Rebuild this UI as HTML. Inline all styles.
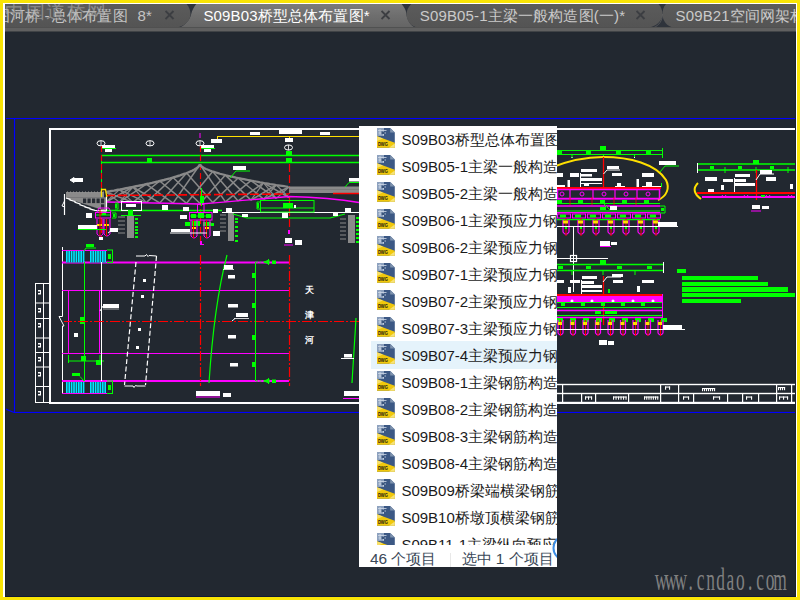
<!DOCTYPE html>
<html><head><meta charset="utf-8">
<style>
html,body{margin:0;padding:0;}
body{width:800px;height:600px;overflow:hidden;background:#f9e405;position:relative;font-family:"Liberation Sans",sans-serif;}
#wf{position:absolute;left:3px;top:3px;width:794px;height:594px;background:#ffffff;}
#cv{position:absolute;left:4px;top:4px;width:792px;height:593px;background:#222830;overflow:hidden;}
#clip{position:absolute;left:4px;top:4px;width:792px;height:593px;overflow:hidden;}
#tabs{position:absolute;left:4px;top:4px;width:792px;height:28px;overflow:hidden;}
.tt{position:absolute;top:2.8px;letter-spacing:0.15px;font-size:15px;line-height:18px;white-space:nowrap;}
#panel{position:absolute;left:359px;top:126px;width:198px;height:441px;background:#fff;overflow:hidden;}
.row{position:absolute;left:0;width:198px;height:27px;}
.row .ic{position:absolute;left:18px;top:1px;}
.row .tx{position:absolute;left:42.4px;top:2.7px;font-size:15px;line-height:20px;color:#1b1b1b;white-space:nowrap;}
.row .tx span{font-size:14.6px;}
#status{position:absolute;left:0;top:419px;width:198px;height:22px;font-size:15.4px;line-height:18px;color:#3a4858;}
#wm{position:absolute;left:655px;top:566px;font-family:"Liberation Serif",serif;font-size:22px;line-height:26px;color:#8d8d8d;}
</style></head>
<body>
<div id="wf"></div>
<div id="cv"></div>
<div id="clip"><svg width="800" height="600" viewBox="0 0 800 600" style="position:absolute;left:-4px;top:-4px">
<rect x="4" y="118" width="792" height="1.1" fill="#0000ff"/>
<rect x="13.9" y="118" width="1.2" height="295" fill="#0000ff"/>
<rect x="13.9" y="411.9" width="782" height="1.1" fill="#0000ff"/>
<line x1="4" y1="408.3" x2="14" y2="412.4" stroke="#0000ff" stroke-width="1.1"/>
<line x1="50" y1="129" x2="796" y2="129" stroke="#ffffff" stroke-width="2"/>
<line x1="50" y1="128" x2="50" y2="404" stroke="#ffffff" stroke-width="2"/>
<line x1="49" y1="403" x2="796" y2="403" stroke="#ffffff" stroke-width="2"/>
<rect x="35.5" y="283.5" width="14" height="119" fill="none" stroke="#ffffff" stroke-width="1"/>
<line x1="43.5" y1="283" x2="43.5" y2="403" stroke="#ffffff" stroke-width="1"/>
<line x1="35" y1="303" x2="50" y2="303" stroke="#ffffff" stroke-width="1"/>
<line x1="35" y1="318.5" x2="50" y2="318.5" stroke="#ffffff" stroke-width="1"/>
<line x1="35" y1="338" x2="50" y2="338" stroke="#ffffff" stroke-width="1"/>
<line x1="35" y1="352.5" x2="50" y2="352.5" stroke="#ffffff" stroke-width="1"/>
<line x1="35" y1="367" x2="50" y2="367" stroke="#ffffff" stroke-width="1"/>
<line x1="35" y1="386.5" x2="50" y2="386.5" stroke="#ffffff" stroke-width="1"/>
<rect x="38" y="290" width="3" height="1.5" fill="#ffffff"/>
<rect x="38" y="293" width="3" height="1.5" fill="#ffffff"/>
<rect x="40" y="291" width="1" height="3" fill="#ffffff"/>
<rect x="38" y="308" width="3" height="1.5" fill="#ffffff"/>
<rect x="38" y="311" width="3" height="1.5" fill="#ffffff"/>
<rect x="40" y="309" width="1" height="3" fill="#ffffff"/>
<rect x="38" y="323" width="3" height="1.5" fill="#ffffff"/>
<rect x="38" y="326" width="3" height="1.5" fill="#ffffff"/>
<rect x="40" y="324" width="1" height="3" fill="#ffffff"/>
<rect x="38" y="343" width="3" height="1.5" fill="#ffffff"/>
<rect x="38" y="346" width="3" height="1.5" fill="#ffffff"/>
<rect x="40" y="344" width="1" height="3" fill="#ffffff"/>
<rect x="38" y="357" width="3" height="1.5" fill="#ffffff"/>
<rect x="38" y="360" width="3" height="1.5" fill="#ffffff"/>
<rect x="40" y="358" width="1" height="3" fill="#ffffff"/>
<rect x="38" y="372" width="3" height="1.5" fill="#ffffff"/>
<rect x="38" y="375" width="3" height="1.5" fill="#ffffff"/>
<rect x="40" y="373" width="1" height="3" fill="#ffffff"/>
<rect x="38" y="391" width="3" height="1.5" fill="#ffffff"/>
<rect x="38" y="394" width="3" height="1.5" fill="#ffffff"/>
<rect x="40" y="392" width="1" height="3" fill="#ffffff"/>
<rect x="555" y="383.8" width="241" height="1.4" fill="#ffffff"/>
<rect x="555" y="392.8" width="241" height="1.4" fill="#ffffff"/>
<rect x="555" y="401.8" width="241" height="1.4" fill="#ffffff"/>
<rect x="562" y="384" width="1.2" height="19" fill="#ffffff"/>
<rect x="660" y="384" width="1.2" height="19" fill="#ffffff"/>
<rect x="678" y="384" width="1.2" height="19" fill="#ffffff"/>
<rect x="776" y="384" width="1.2" height="19" fill="#ffffff"/>
<rect x="791" y="384" width="1.2" height="19" fill="#ffffff"/>
<rect x="581" y="393" width="1.2" height="10" fill="#ffffff"/>
<rect x="595" y="393" width="1.2" height="10" fill="#ffffff"/>
<rect x="628" y="393" width="1.2" height="10" fill="#ffffff"/>
<rect x="693" y="393" width="1.2" height="10" fill="#ffffff"/>
<rect x="727" y="393" width="1.2" height="10" fill="#ffffff"/>
<rect x="742" y="393" width="1.2" height="10" fill="#ffffff"/>
<rect x="758" y="393" width="1.2" height="10" fill="#ffffff"/>
<rect x="665" y="386.5" width="1.1" height="3.2" fill="#ffffff"/>
<rect x="669" y="386.5" width="1.1" height="3.2" fill="#ffffff"/>
<rect x="665" y="386.5" width="5.1" height="1.1" fill="#ffffff"/>
<rect x="702" y="388" width="1.1" height="3.2" fill="#ffffff"/>
<rect x="704" y="388" width="1.1" height="3.2" fill="#ffffff"/>
<rect x="706" y="388" width="1.1" height="3.2" fill="#ffffff"/>
<rect x="708" y="388" width="1.1" height="3.2" fill="#ffffff"/>
<rect x="710" y="388" width="1.1" height="3.2" fill="#ffffff"/>
<rect x="712" y="388" width="1.1" height="3.2" fill="#ffffff"/>
<rect x="714" y="388" width="1.1" height="3.2" fill="#ffffff"/>
<rect x="702" y="388" width="13.1" height="1.1" fill="#ffffff"/>
<rect x="778" y="387" width="1.1" height="3.2" fill="#ffffff"/>
<rect x="780" y="387" width="1.1" height="3.2" fill="#ffffff"/>
<rect x="782" y="387" width="1.1" height="3.2" fill="#ffffff"/>
<rect x="784" y="387" width="1.1" height="3.2" fill="#ffffff"/>
<rect x="778" y="387" width="7.1" height="1.1" fill="#ffffff"/>
<rect x="585" y="396.5" width="1.1" height="3.2" fill="#ffffff"/>
<rect x="588" y="396.5" width="1.1" height="3.2" fill="#ffffff"/>
<rect x="591" y="396.5" width="1.1" height="3.2" fill="#ffffff"/>
<rect x="585" y="396.5" width="7.1" height="1.1" fill="#ffffff"/>
<rect x="613.0" y="396.5" width="1.1" height="3.2" fill="#ffffff"/>
<rect x="615.5" y="396.5" width="1.1" height="3.2" fill="#ffffff"/>
<rect x="618.0" y="396.5" width="1.1" height="3.2" fill="#ffffff"/>
<rect x="620.5" y="396.5" width="1.1" height="3.2" fill="#ffffff"/>
<rect x="623.0" y="396.5" width="1.1" height="3.2" fill="#ffffff"/>
<rect x="625.5" y="396.5" width="1.1" height="3.2" fill="#ffffff"/>
<rect x="613" y="396.5" width="13.6" height="1.1" fill="#ffffff"/>
<rect x="644.0" y="396.5" width="1.1" height="3.2" fill="#ffffff"/>
<rect x="646.2" y="396.5" width="1.1" height="3.2" fill="#ffffff"/>
<rect x="648.4" y="396.5" width="1.1" height="3.2" fill="#ffffff"/>
<rect x="650.6" y="396.5" width="1.1" height="3.2" fill="#ffffff"/>
<rect x="652.8" y="396.5" width="1.1" height="3.2" fill="#ffffff"/>
<rect x="655.0" y="396.5" width="1.1" height="3.2" fill="#ffffff"/>
<rect x="657.2" y="396.5" width="1.1" height="3.2" fill="#ffffff"/>
<rect x="644" y="396.5" width="14.3" height="1.1" fill="#ffffff"/>
<rect x="683" y="396.5" width="1.1" height="3.2" fill="#ffffff"/>
<rect x="688" y="396.5" width="1.1" height="3.2" fill="#ffffff"/>
<rect x="683" y="396.5" width="6.1" height="1.1" fill="#ffffff"/>
<rect x="713" y="396.5" width="1.1" height="3.2" fill="#ffffff"/>
<rect x="719" y="396.5" width="1.1" height="3.2" fill="#ffffff"/>
<rect x="713" y="396.5" width="7.1" height="1.1" fill="#ffffff"/>
<rect x="746" y="396.5" width="1.1" height="3.2" fill="#ffffff"/>
<rect x="751" y="396.5" width="1.1" height="3.2" fill="#ffffff"/>
<rect x="746" y="396.5" width="6.1" height="1.1" fill="#ffffff"/>
<rect x="779" y="396.5" width="1.1" height="3.2" fill="#ffffff"/>
<rect x="783" y="396.5" width="1.1" height="3.2" fill="#ffffff"/>
<rect x="787" y="396.5" width="1.1" height="3.2" fill="#ffffff"/>
<rect x="779" y="396.5" width="9.1" height="1.1" fill="#ffffff"/>
<ellipse cx="101" cy="143.3" rx="4" ry="2.6" fill="none" stroke="#ffffff" stroke-width="1"/>
<line x1="101" y1="140.8" x2="101" y2="145.8" stroke="#ffffff" stroke-width="0.8"/>
<ellipse cx="150" cy="143.3" rx="4" ry="2.6" fill="none" stroke="#ffffff" stroke-width="1"/>
<line x1="150" y1="140.8" x2="150" y2="145.8" stroke="#ffffff" stroke-width="0.8"/>
<ellipse cx="200" cy="143.3" rx="4" ry="2.6" fill="none" stroke="#ffffff" stroke-width="1"/>
<line x1="200" y1="140.8" x2="200" y2="145.8" stroke="#ffffff" stroke-width="0.8"/>
<ellipse cx="288.5" cy="147.5" rx="4" ry="2.6" fill="none" stroke="#ffffff" stroke-width="1"/>
<line x1="288.5" y1="145.0" x2="288.5" y2="150.0" stroke="#ffffff" stroke-width="0.8"/>
<rect x="102" y="145" width="13" height="3" fill="#ffffff"/>
<rect x="105" y="148" width="7" height="4" fill="#ffffff"/>
<line x1="101" y1="148.5" x2="116" y2="148.5" stroke="#00ff00" stroke-width="1"/>
<rect x="201" y="145" width="13" height="3" fill="#ffffff"/>
<rect x="204" y="148" width="7" height="4" fill="#ffffff"/>
<line x1="200" y1="148.5" x2="215" y2="148.5" stroke="#00ff00" stroke-width="1"/>
<line x1="217" y1="136.5" x2="360" y2="136.5" stroke="#ffe000" stroke-width="1"/>
<line x1="217.5" y1="136" x2="217.5" y2="141" stroke="#ffe000" stroke-width="1"/>
<line x1="289.5" y1="136" x2="289.5" y2="141" stroke="#ffe000" stroke-width="1"/>
<rect x="211" y="139" width="11" height="4" fill="#ffffff"/>
<rect x="285" y="138" width="8" height="4" fill="#ffffff"/>
<rect x="250" y="132" width="10" height="3" fill="#ffffff"/>
<rect x="279" y="130" width="23" height="4" fill="#ffffff"/>
<rect x="320" y="132" width="10" height="3" fill="#ffffff"/>
<rect x="199.5" y="133" width="1" height="5" fill="#ff00ff"/>
<line x1="101" y1="155.5" x2="360" y2="155.5" stroke="#00ff00" stroke-width="1.3"/>
<line x1="101" y1="162.5" x2="360" y2="162.5" stroke="#00ff00" stroke-width="1.3"/>
<line x1="101.5" y1="155" x2="101.5" y2="212" stroke="#00ff00" stroke-width="1"/>
<rect x="147" y="158" width="5" height="4" fill="#00ff00"/>
<rect x="286" y="151" width="6" height="4" fill="#00ff00"/>
<rect x="286" y="158" width="6" height="4" fill="#00ff00"/>
<line x1="101.5" y1="146" x2="101.5" y2="240" stroke="#ff0000" stroke-width="1.2" stroke-dasharray="6,3"/>
<line x1="200.5" y1="146" x2="200.5" y2="242" stroke="#ff0000" stroke-width="1.2" stroke-dasharray="6,3"/>
<line x1="289.5" y1="164" x2="289.5" y2="232" stroke="#ff0000" stroke-width="1.2" stroke-dasharray="8,3"/>
<g stroke="#8a8a8a" fill="none" stroke-width="1.2">
<polyline points="106.0,192.0 108.0,191.6 110.0,191.3 112.0,190.9 114.0,190.6 116.0,190.2 118.0,189.8 120.0,189.5 122.0,189.1 124.0,188.7 126.0,188.3 128.0,187.9 130.0,187.5 132.0,187.1 134.0,186.7 136.0,186.3 138.0,185.9 140.0,185.5 142.0,185.1 144.0,184.7 146.0,184.2 148.0,183.8 150.0,183.3 152.0,182.9 154.0,182.4 156.0,181.9 158.0,181.5 160.0,181.0 162.0,180.5 164.0,180.0 166.0,179.4 168.0,178.9 170.0,178.4 172.0,177.8 174.0,177.2 176.0,176.6 178.0,176.0 180.0,175.4 182.0,174.7 184.0,174.0 186.0,173.3 188.0,172.5 190.0,171.7 192.0,170.8 194.0,169.8 196.0,168.6 198.0,167.2 200.0,164.5" stroke-width="2.4"/>
<polyline points="200.0,164.5 202.0,166.8 204.0,168.0 206.0,169.0 208.0,169.8 210.0,170.6 212.0,171.3 214.0,171.9 216.0,172.5 218.0,173.1 220.0,173.7 222.0,174.2 224.0,174.7 226.0,175.3 228.0,175.7 230.0,176.2 232.0,176.7 234.0,177.1 236.0,177.6 238.0,178.0 240.0,178.4 242.0,178.8 244.0,179.2 246.0,179.6 248.0,180.0 250.0,180.4 252.0,180.8 254.0,181.2 256.0,181.5 258.0,181.9 260.0,182.3 262.0,182.6 264.0,183.0 266.0,183.3 268.0,183.6 270.0,184.0 272.0,184.3 274.0,184.6 276.0,185.0 278.0,185.3 280.0,185.6 282.0,185.9 284.0,186.2 286.0,186.5 288.0,186.8" stroke-width="2.2"/>
<line x1="106.0" y1="192.0" x2="132.9" y2="202.4" stroke-width="1.5"/>
<line x1="106.0" y1="192.0" x2="119.4" y2="202.2" stroke-width="1.2"/>
<line x1="119.4" y1="189.6" x2="146.3" y2="202.6" stroke-width="1.5"/>
<line x1="119.4" y1="189.6" x2="106.0" y2="202.0" stroke-width="1.2"/>
<line x1="119.4" y1="189.6" x2="132.9" y2="202.4" stroke-width="1.2"/>
<line x1="132.9" y1="187.0" x2="106.0" y2="202.0" stroke-width="1.5"/>
<line x1="132.9" y1="187.0" x2="159.7" y2="202.9" stroke-width="1.5"/>
<line x1="132.9" y1="187.0" x2="119.4" y2="202.2" stroke-width="1.2"/>
<line x1="132.9" y1="187.0" x2="146.3" y2="202.6" stroke-width="1.2"/>
<line x1="146.3" y1="184.2" x2="119.4" y2="202.2" stroke-width="1.5"/>
<line x1="146.3" y1="184.2" x2="173.1" y2="203.1" stroke-width="1.5"/>
<line x1="159.7" y1="181.0" x2="132.9" y2="202.4" stroke-width="1.5"/>
<line x1="159.7" y1="181.0" x2="186.6" y2="203.3" stroke-width="1.5"/>
<line x1="173.1" y1="177.5" x2="146.3" y2="202.6" stroke-width="1.5"/>
<line x1="173.1" y1="177.5" x2="200.0" y2="203.5" stroke-width="1.5"/>
<line x1="186.6" y1="173.1" x2="159.7" y2="202.9" stroke-width="1.5"/>
<line x1="186.6" y1="173.1" x2="212.7" y2="202.6" stroke-width="1.5"/>
<line x1="200.0" y1="164.5" x2="173.1" y2="203.1" stroke-width="1.5"/>
<line x1="200.0" y1="164.5" x2="225.4" y2="201.8" stroke-width="1.5"/>
<line x1="212.7" y1="171.5" x2="186.6" y2="203.3" stroke-width="1.5"/>
<line x1="212.7" y1="171.5" x2="238.1" y2="200.9" stroke-width="1.5"/>
<line x1="225.4" y1="175.1" x2="200.0" y2="203.5" stroke-width="1.5"/>
<line x1="225.4" y1="175.1" x2="250.9" y2="200.1" stroke-width="1.5"/>
<line x1="238.1" y1="178.0" x2="212.7" y2="202.6" stroke-width="1.5"/>
<line x1="238.1" y1="178.0" x2="263.6" y2="199.2" stroke-width="1.5"/>
<line x1="250.9" y1="180.6" x2="225.4" y2="201.8" stroke-width="1.5"/>
<line x1="250.9" y1="180.6" x2="276.3" y2="198.4" stroke-width="1.5"/>
<line x1="263.6" y1="182.9" x2="238.1" y2="200.9" stroke-width="1.5"/>
<line x1="263.6" y1="182.9" x2="289.0" y2="197.5" stroke-width="1.5"/>
<line x1="263.6" y1="182.9" x2="250.9" y2="200.1" stroke-width="1.2"/>
<line x1="263.6" y1="182.9" x2="276.3" y2="198.4" stroke-width="1.2"/>
<line x1="276.3" y1="185.0" x2="250.9" y2="200.1" stroke-width="1.5"/>
<line x1="276.3" y1="185.0" x2="263.6" y2="199.2" stroke-width="1.2"/>
<line x1="276.3" y1="185.0" x2="289.0" y2="197.5" stroke-width="1.2"/>
<line x1="289.0" y1="187.0" x2="263.6" y2="199.2" stroke-width="1.5"/>
<line x1="289.0" y1="187.0" x2="276.3" y2="198.4" stroke-width="1.2"/>
</g>
<rect x="66" y="192" width="38" height="5.5" fill="#8a8a8a"/>
<rect x="67" y="191.5" width="1" height="1" fill="#9a9a9a"/>
<rect x="70" y="191.5" width="1" height="1" fill="#9a9a9a"/>
<rect x="73" y="191.5" width="1" height="1" fill="#9a9a9a"/>
<rect x="76" y="191.5" width="1" height="1" fill="#9a9a9a"/>
<rect x="79" y="191.5" width="1" height="1" fill="#9a9a9a"/>
<rect x="82" y="191.5" width="1" height="1" fill="#9a9a9a"/>
<rect x="85" y="191.5" width="1" height="1" fill="#9a9a9a"/>
<rect x="88" y="191.5" width="1" height="1" fill="#9a9a9a"/>
<rect x="91" y="191.5" width="1" height="1" fill="#9a9a9a"/>
<rect x="94" y="191.5" width="1" height="1" fill="#9a9a9a"/>
<rect x="97" y="191.5" width="1" height="1" fill="#9a9a9a"/>
<rect x="100" y="191.5" width="1" height="1" fill="#9a9a9a"/>
<rect x="103" y="191.5" width="1" height="1" fill="#9a9a9a"/>
<path d="M66 197.5 L106 197.5 L106 211 L66 198 Z" stroke="#8a8a8a" stroke-width="0.3" fill="#8a8a8a"/>
<rect x="83" y="198.5" width="3.2" height="4.6" fill="#272c34"/>
<rect x="87.5" y="198.5" width="3.2" height="4.6" fill="#272c34"/>
<rect x="92" y="198.5" width="3.2" height="4.6" fill="#272c34"/>
<rect x="96.5" y="198.5" width="3.2" height="4.6" fill="#272c34"/>
<rect x="101" y="198.5" width="3.2" height="4.6" fill="#272c34"/>
<rect x="101" y="204.3" width="3.2" height="4.6" fill="#272c34"/>
<path d="M66 198 L70 199.3 L70 200 L75 201.5 L75 202.3 L80 204 L80 204.8 L85 206.4 L85 207 L90 208.3 L90 209 L95 210.4 L106 211" stroke="#ffffff" stroke-width="1.3" fill="none"/>
<line x1="106.5" y1="196" x2="106.5" y2="211.5" stroke="#ffffff" stroke-width="1.2"/>
<line x1="64.5" y1="194" x2="64.5" y2="215" stroke="#ffffff" stroke-width="1.2"/>
<path d="M64.5 201 L62 206 L65 207" stroke="#ffffff" stroke-width="1" fill="none"/>
<rect x="289" y="186.5" width="71" height="6.5" fill="#8a8a8a"/>
<line x1="289" y1="189.5" x2="360" y2="189.5" stroke="#787878" stroke-width="0.8"/>
<line x1="106" y1="195.5" x2="289" y2="194" stroke="#ff0000" stroke-width="1.6" stroke-dasharray="9,3"/>
<line x1="333" y1="193.5" x2="360" y2="193.5" stroke="#ff0000" stroke-width="1.5"/>
<path d="M107 202 Q160 203 200 204 Q250 200 289 196.5 Q330 197.5 359 202.5" stroke="#ff00ff" stroke-width="1.4" fill="none"/>
<path d="M101.5 197 L101.5 189.5 L105.5 189.5 L106.8 197" stroke="#ffe000" stroke-width="1.3" fill="none"/>
<rect x="233" y="166" width="13" height="4" fill="#ffffff"/>
<line x1="236" y1="171" x2="250" y2="171" stroke="#00ff00" stroke-width="1"/>
<line x1="230" y1="178" x2="236" y2="171" stroke="#00ff00" stroke-width="1"/>
<rect x="349" y="178" width="12" height="3.5" fill="#ffffff"/>
<line x1="349" y1="182.5" x2="360" y2="182.5" stroke="#00ff00" stroke-width="1"/>
<line x1="345" y1="187" x2="349" y2="182.5" stroke="#00ff00" stroke-width="1"/>
<rect x="74" y="178" width="9" height="4" fill="#ffffff"/>
<path d="M70 180 L74 177.5 L74 182.5 Z" stroke="#ffffff" stroke-width="1" fill="#ffffff"/>
<line x1="107" y1="210.5" x2="222" y2="210.5" stroke="#00ff00" stroke-width="1.3"/>
<line x1="222" y1="212.5" x2="359" y2="212.5" stroke="#ffffff" stroke-width="1.2"/>
<rect x="121.5" y="201.5" width="20" height="9" fill="none" stroke="#ffffff" stroke-width="1"/>
<rect x="126" y="204" width="10" height="3" fill="#ffffff"/>
<path d="M115 203 L118 203 L118 209 L115 209" stroke="#00ff00" stroke-width="1" fill="none"/>
<rect x="115" y="204" width="2" height="4" fill="#00ff00"/>
<line x1="121" y1="215.5" x2="141" y2="215.5" stroke="#00ff00" stroke-width="1"/>
<rect x="128" y="210" width="5" height="5" fill="#00ff00"/>
<rect x="127" y="216" width="7" height="22" fill="#8a8a8a"/>
<rect x="135" y="218" width="3" height="2" fill="#00ff00"/>
<rect x="135" y="222" width="3" height="2" fill="#00ff00"/>
<rect x="135" y="226" width="3" height="2" fill="#00ff00"/>
<rect x="135" y="229" width="3" height="2" fill="#00ff00"/>
<rect x="135" y="232" width="3" height="2" fill="#00ff00"/>
<rect x="135" y="236" width="3" height="2" fill="#00ff00"/>
<line x1="118" y1="217" x2="125" y2="217" stroke="#8a8a8a" stroke-width="1"/>
<line x1="118" y1="221" x2="125" y2="221" stroke="#8a8a8a" stroke-width="1"/>
<line x1="118" y1="225" x2="125" y2="225" stroke="#8a8a8a" stroke-width="1"/>
<line x1="118" y1="229" x2="125" y2="229" stroke="#8a8a8a" stroke-width="1"/>
<line x1="118" y1="233" x2="125" y2="233" stroke="#8a8a8a" stroke-width="1"/>
<rect x="86" y="213" width="6" height="5" fill="#ffffff"/>
<path d="M97 212 L99 208 L109 208 L111 212" stroke="#ff00ff" stroke-width="1" fill="none"/>
<rect x="95.5" y="212.5" width="15" height="5.5" fill="none" stroke="#ff00ff" stroke-width="1"/>
<line x1="96" y1="215" x2="110" y2="215" stroke="#00ff00" stroke-width="1"/>
<rect x="102" y="213" width="4" height="2" fill="#00ff00"/>
<path d="M112 213 L116 213 L116 218 L112 218" stroke="#00ff00" stroke-width="1" fill="none"/>
<rect x="113" y="214" width="2" height="3" fill="#00ff00"/>
<path d="M97 219 L97 234 Q100 238 103 234 L103 219" stroke="#ff00ff" stroke-width="1" fill="none"/>
<path d="M104 219 L104 234 Q107 238 110 234 L110 219" stroke="#ff00ff" stroke-width="1" fill="none"/>
<rect x="97" y="224" width="5" height="2" fill="#ffe000"/>
<rect x="104" y="224" width="5" height="2" fill="#ffe000"/>
<line x1="100" y1="210" x2="100" y2="236" stroke="#ff0000" stroke-width="1"/>
<line x1="106.5" y1="219" x2="106.5" y2="236" stroke="#ff0000" stroke-width="1"/>
<rect x="78" y="225" width="19" height="4" fill="#ffffff"/>
<line x1="78" y1="229.5" x2="106" y2="229.5" stroke="#00ff00" stroke-width="1"/>
<rect x="110" y="228" width="8" height="4" fill="#ffffff"/>
<line x1="108" y1="233" x2="112" y2="230" stroke="#ffffff" stroke-width="1"/>
<rect x="99" y="237" width="4" height="3" fill="#ffffff"/>
<rect x="86" y="244" width="8" height="2" fill="#00ff00"/>
<rect x="197.5" y="204.5" width="6.5" height="8" fill="none" stroke="#ff00ff" stroke-width="1"/>
<rect x="189.5" y="212.5" width="22.5" height="7.5" fill="none" stroke="#ff00ff" stroke-width="1"/>
<rect x="191" y="214" width="5" height="4" fill="#00ff00"/>
<rect x="198" y="213" width="6" height="5" fill="#00ff00"/>
<rect x="206" y="214" width="5" height="4" fill="#00ff00"/>
<line x1="190" y1="216" x2="212" y2="216" stroke="#00ff00" stroke-width="0.8"/>
<rect x="185" y="222" width="5" height="4" fill="#00ff00"/>
<rect x="192" y="221" width="8" height="5" fill="#00ff00"/>
<rect x="203" y="222" width="8" height="4" fill="#00ff00"/>
<rect x="211" y="223" width="3" height="3" fill="#00ff00"/>
<path d="M191 220 L191 236 Q194 240 197 236 L197 220" stroke="#ff00ff" stroke-width="1" fill="none"/>
<path d="M204 220 L204 236 Q207 240 210 236 L210 220" stroke="#ff00ff" stroke-width="1" fill="none"/>
<rect x="192" y="227" width="4" height="2" fill="#ffe000"/>
<rect x="205" y="227" width="4" height="2" fill="#ffe000"/>
<line x1="193.5" y1="220" x2="193.5" y2="238" stroke="#ff0000" stroke-width="1"/>
<line x1="206.5" y1="220" x2="206.5" y2="238" stroke="#ff0000" stroke-width="1"/>
<rect x="171" y="229" width="19" height="3" fill="#ffffff"/>
<line x1="170" y1="233" x2="207" y2="233" stroke="#ffffff" stroke-width="1"/>
<rect x="162" y="205" width="6" height="5" fill="#ffffff"/>
<rect x="183" y="207" width="6" height="4" fill="#ffffff"/>
<rect x="180" y="215" width="7" height="4" fill="#ffffff"/>
<rect x="213" y="209" width="5" height="4" fill="#ffffff"/>
<rect x="226" y="208" width="6" height="5" fill="#ffffff"/>
<rect x="213" y="231" width="7" height="5" fill="#ffffff"/>
<rect x="200" y="241" width="2" height="4" fill="#ff00ff"/>
<line x1="200" y1="244.5" x2="204" y2="244.5" stroke="#ff00ff" stroke-width="1"/>
<rect x="228" y="213" width="6" height="28" fill="#8a8a8a"/>
<rect x="235" y="218" width="3" height="2" fill="#00ff00"/>
<rect x="235" y="221" width="3" height="2" fill="#00ff00"/>
<rect x="235" y="226" width="3" height="2" fill="#00ff00"/>
<rect x="235" y="230" width="3" height="2" fill="#00ff00"/>
<rect x="235" y="235" width="3" height="2" fill="#00ff00"/>
<rect x="235" y="240" width="3" height="2" fill="#00ff00"/>
<line x1="220" y1="215" x2="226" y2="215" stroke="#8a8a8a" stroke-width="1"/>
<line x1="220" y1="219" x2="226" y2="219" stroke="#8a8a8a" stroke-width="1"/>
<line x1="220" y1="223" x2="226" y2="223" stroke="#8a8a8a" stroke-width="1"/>
<line x1="220" y1="227" x2="226" y2="227" stroke="#8a8a8a" stroke-width="1"/>
<line x1="220" y1="231" x2="226" y2="231" stroke="#8a8a8a" stroke-width="1"/>
<rect x="348" y="215" width="7" height="28" fill="#8a8a8a"/>
<rect x="356" y="217" width="3" height="2" fill="#00ff00"/>
<rect x="356" y="221" width="3" height="2" fill="#00ff00"/>
<rect x="356" y="225" width="3" height="2" fill="#00ff00"/>
<rect x="356" y="229" width="3" height="2" fill="#00ff00"/>
<rect x="356" y="233" width="3" height="2" fill="#00ff00"/>
<rect x="356" y="237" width="3" height="2" fill="#00ff00"/>
<rect x="356" y="241" width="3" height="2" fill="#00ff00"/>
<line x1="340" y1="219" x2="346" y2="219" stroke="#8a8a8a" stroke-width="1"/>
<line x1="340" y1="223" x2="346" y2="223" stroke="#8a8a8a" stroke-width="1"/>
<line x1="340" y1="227" x2="346" y2="227" stroke="#8a8a8a" stroke-width="1"/>
<line x1="340" y1="231" x2="346" y2="231" stroke="#8a8a8a" stroke-width="1"/>
<line x1="340" y1="235" x2="346" y2="235" stroke="#8a8a8a" stroke-width="1"/>
<line x1="340" y1="239" x2="346" y2="239" stroke="#8a8a8a" stroke-width="1"/>
<path d="M233 214 L247 218 L330 218 L345 214" stroke="#00ff00" stroke-width="1.2" fill="none"/>
<rect x="260.5" y="200.5" width="53.5" height="11.5" fill="none" stroke="#00ff00" stroke-width="1"/>
<line x1="260" y1="208" x2="314" y2="208" stroke="#00ff00" stroke-width="1"/>
<rect x="283" y="203" width="10" height="5" fill="#00ff00"/>
<rect x="294" y="205" width="2" height="3" fill="#ffffff"/>
<path d="M260 202 L257 202 L257 209 L260 209" stroke="#00ff00" stroke-width="1" fill="none"/>
<rect x="257" y="203" width="2" height="5" fill="#00ff00"/>
<rect x="282" y="213" width="6" height="5" fill="#ffffff"/>
<rect x="242" y="214" width="6" height="3" fill="#ffffff"/>
<rect x="333" y="213" width="5" height="3" fill="#ffffff"/>
<rect x="345" y="208" width="6" height="4" fill="#ffffff"/>
<rect x="285" y="238" width="7" height="5" fill="#ffffff"/>
<rect x="295" y="240" width="7" height="5" fill="#ffffff"/>
<line x1="284" y1="245" x2="293" y2="245" stroke="#ff00ff" stroke-width="1"/>
<rect x="288" y="230" width="2" height="4" fill="#ff00ff"/>
<line x1="201.5" y1="188" x2="201.5" y2="206" stroke="#00ff00" stroke-width="1"/>
<rect x="200" y="196" width="4" height="7" fill="#00ff00"/>
<line x1="62.5" y1="247" x2="62.5" y2="394" stroke="#ffffff" stroke-width="1"/>
<line x1="62" y1="262.5" x2="289" y2="262.5" stroke="#ff00ff" stroke-width="2"/>
<line x1="62" y1="381" x2="289" y2="381" stroke="#ff00ff" stroke-width="2"/>
<line x1="62" y1="290.5" x2="289" y2="290.5" stroke="#ff00ff" stroke-width="1.2"/>
<line x1="62" y1="353.5" x2="289" y2="353.5" stroke="#ff00ff" stroke-width="1.2"/>
<rect x="68.5" y="290.5" width="31" height="63" fill="none" stroke="#ff00ff" stroke-width="1"/>
<rect x="66" y="250" width="17" height="12.5" fill="#1c3a44"/>
<rect x="66" y="250" width="1.6" height="12.5" fill="#00e5ff"/>
<rect x="68.4" y="250" width="1.6" height="12.5" fill="#00e5ff"/>
<rect x="70.80000000000001" y="250" width="1.6" height="12.5" fill="#00e5ff"/>
<rect x="73.20000000000002" y="250" width="1.6" height="12.5" fill="#00e5ff"/>
<rect x="75.60000000000002" y="250" width="1.6" height="12.5" fill="#00e5ff"/>
<rect x="78.00000000000003" y="250" width="1.6" height="12.5" fill="#00e5ff"/>
<rect x="80.40000000000003" y="250" width="1.6" height="12.5" fill="#00e5ff"/>
<rect x="82.80000000000004" y="250" width="1.6" height="12.5" fill="#00e5ff"/>
<rect x="90" y="250" width="16" height="12.5" fill="#1c3a44"/>
<rect x="90" y="250" width="1.6" height="12.5" fill="#00e5ff"/>
<rect x="92.4" y="250" width="1.6" height="12.5" fill="#00e5ff"/>
<rect x="94.80000000000001" y="250" width="1.6" height="12.5" fill="#00e5ff"/>
<rect x="97.20000000000002" y="250" width="1.6" height="12.5" fill="#00e5ff"/>
<rect x="99.60000000000002" y="250" width="1.6" height="12.5" fill="#00e5ff"/>
<rect x="102.00000000000003" y="250" width="1.6" height="12.5" fill="#00e5ff"/>
<rect x="104.40000000000003" y="250" width="1.6" height="12.5" fill="#00e5ff"/>
<line x1="62" y1="250.5" x2="107" y2="250.5" stroke="#ff00ff" stroke-width="1.2"/>
<path d="M107 250 L113 250 M107 262.5 L113 262.5 M112.5 250 L112.5 262.5" stroke="#00ff00" stroke-width="1" fill="none"/>
<rect x="108" y="254" width="3" height="5" fill="#00ff00"/>
<rect x="66" y="381" width="17" height="12.5" fill="#1c3a44"/>
<rect x="66" y="381" width="1.6" height="12.5" fill="#00e5ff"/>
<rect x="68.4" y="381" width="1.6" height="12.5" fill="#00e5ff"/>
<rect x="70.80000000000001" y="381" width="1.6" height="12.5" fill="#00e5ff"/>
<rect x="73.20000000000002" y="381" width="1.6" height="12.5" fill="#00e5ff"/>
<rect x="75.60000000000002" y="381" width="1.6" height="12.5" fill="#00e5ff"/>
<rect x="78.00000000000003" y="381" width="1.6" height="12.5" fill="#00e5ff"/>
<rect x="80.40000000000003" y="381" width="1.6" height="12.5" fill="#00e5ff"/>
<rect x="82.80000000000004" y="381" width="1.6" height="12.5" fill="#00e5ff"/>
<rect x="90" y="381" width="16" height="12.5" fill="#1c3a44"/>
<rect x="90" y="381" width="1.6" height="12.5" fill="#00e5ff"/>
<rect x="92.4" y="381" width="1.6" height="12.5" fill="#00e5ff"/>
<rect x="94.80000000000001" y="381" width="1.6" height="12.5" fill="#00e5ff"/>
<rect x="97.20000000000002" y="381" width="1.6" height="12.5" fill="#00e5ff"/>
<rect x="99.60000000000002" y="381" width="1.6" height="12.5" fill="#00e5ff"/>
<rect x="102.00000000000003" y="381" width="1.6" height="12.5" fill="#00e5ff"/>
<rect x="104.40000000000003" y="381" width="1.6" height="12.5" fill="#00e5ff"/>
<line x1="62" y1="381.5" x2="107" y2="381.5" stroke="#ff00ff" stroke-width="1.2"/>
<path d="M107 381 L113 381 M107 393.5 L113 393.5 M112.5 381 L112.5 393.5" stroke="#00ff00" stroke-width="1" fill="none"/>
<rect x="108" y="385" width="3" height="5" fill="#00ff00"/>
<line x1="62" y1="393.5" x2="107" y2="393.5" stroke="#ff00ff" stroke-width="1.2"/>
<rect x="86" y="244" width="8" height="3" fill="#00ff00"/>
<path d="M84 251 L86 248 L96 248" stroke="#00ff00" stroke-width="1" fill="none"/>
<rect x="72" y="373" width="8" height="3" fill="#00ff00"/>
<path d="M80 376.5 L84 381" stroke="#00ff00" stroke-width="1" fill="none"/>
<line x1="84.5" y1="262" x2="84.5" y2="381" stroke="#00ff00" stroke-width="1"/>
<rect x="80" y="317" width="4" height="7" fill="#00ff00"/>
<rect x="81" y="356" width="5" height="5" fill="#00ff00"/>
<rect x="96" y="360" width="5" height="5" fill="#00ff00"/>
<line x1="68" y1="361" x2="104" y2="361" stroke="#00ff00" stroke-width="1"/>
<line x1="68.5" y1="355" x2="68.5" y2="363" stroke="#00ff00" stroke-width="1"/>
<line x1="100" y1="355" x2="100" y2="363" stroke="#00ff00" stroke-width="1"/>
<line x1="101.5" y1="262" x2="101.5" y2="381" stroke="#ffffff" stroke-width="1"/>
<rect x="103" y="304" width="16" height="4" fill="#ffffff"/>
<line x1="100" y1="311" x2="103" y2="306" stroke="#ffffff" stroke-width="1"/>
<line x1="103" y1="309" x2="119" y2="309" stroke="#ffffff" stroke-width="0.6"/>
<rect x="74" y="333" width="4" height="4" fill="#ffffff"/>
<line x1="62" y1="321.5" x2="360" y2="321.5" stroke="#ff0000" stroke-width="1.2" stroke-dasharray="10,2,2,2"/>
<line x1="200.5" y1="255" x2="200.5" y2="386" stroke="#ff0000" stroke-width="1.2" stroke-dasharray="10,2,2,2"/>
<line x1="289.5" y1="255" x2="289.5" y2="386" stroke="#ff0000" stroke-width="1.2" stroke-dasharray="10,2,2,2"/>
<rect x="61" y="314" width="3" height="13" fill="#222830"/>
<path d="M62.5 314 L62.5 316.5 L59 316.5 L64 326 L62.5 326 L62.5 328" stroke="#ffffff" stroke-width="1" fill="none"/>
<path d="M136 256 L145 256 L146.5 254.5 L148 256.5 L149 255.5 L156.5 256" stroke="#ffffff" stroke-width="1" fill="none"/>
<path d="M124.5 386 L133 386 L134 387.5 L135.5 385.5 L137 386 L145.5 386" stroke="#ffffff" stroke-width="1" fill="none"/>
<line x1="136" y1="262" x2="124.5" y2="385" stroke="#ffffff" stroke-width="1.2" stroke-dasharray="5,2.5"/>
<line x1="156.5" y1="256" x2="145.5" y2="385" stroke="#ffffff" stroke-width="1.2" stroke-dasharray="5,2.5"/>
<rect x="143" y="279" width="3" height="3" fill="#ffffff"/>
<rect x="141" y="295" width="3" height="3" fill="#ffffff"/>
<rect x="138" y="328" width="3" height="3" fill="#ffffff"/>
<rect x="136" y="346" width="3" height="3" fill="#ffffff"/>
<path d="M227 255 Q214 305 209 383" stroke="#00ff00" stroke-width="1.2" fill="none"/>
<path d="M356 318 Q354 350 352 383" stroke="#00ff00" stroke-width="1.2" fill="none"/>
<line x1="255.5" y1="262" x2="255.5" y2="381" stroke="#00ff00" stroke-width="1"/>
<rect x="252" y="273" width="3.5" height="5" fill="#00ff00"/>
<rect x="252" y="303" width="3.5" height="5" fill="#00ff00"/>
<rect x="252" y="335" width="3.5" height="5" fill="#00ff00"/>
<rect x="252" y="362" width="3.5" height="5" fill="#00ff00"/>
<line x1="256" y1="262" x2="266" y2="262" stroke="#00ff00" stroke-width="0.8" stroke-dasharray="2,1.5"/>
<path d="M264 262 L269 260 L269 264 Z" stroke="#00ff00" stroke-width="1" fill="#00ff00"/>
<line x1="268.5" y1="259" x2="268.5" y2="265" stroke="#00ff00" stroke-width="1"/>
<rect x="272" y="260.5" width="4" height="3.5" fill="#00ff00"/>
<line x1="256" y1="381" x2="266" y2="381" stroke="#00ff00" stroke-width="0.8" stroke-dasharray="2,1.5"/>
<path d="M264 381 L269 379 L269 383 Z" stroke="#00ff00" stroke-width="1" fill="#00ff00"/>
<line x1="268.5" y1="378" x2="268.5" y2="384" stroke="#00ff00" stroke-width="1"/>
<rect x="272" y="379.5" width="4" height="3.5" fill="#00ff00"/>
<rect x="228" y="275" width="7" height="3.5" fill="#ffffff"/>
<rect x="228" y="304" width="10" height="3.5" fill="#ffffff"/>
<rect x="228" y="335" width="8" height="3.5" fill="#ffffff"/>
<rect x="230" y="363" width="8" height="3.5" fill="#ffffff"/>
<rect x="224" y="265" width="9" height="4" fill="#ffffff"/>
<line x1="223" y1="269.5" x2="234" y2="269.5" stroke="#ffffff" stroke-width="0.8"/>
<rect x="236" y="313" width="12" height="4" fill="#ffffff"/>
<line x1="234" y1="318.5" x2="249" y2="318.5" stroke="#ffffff" stroke-width="0.8"/>
<line x1="232" y1="321" x2="235" y2="318.5" stroke="#ffffff" stroke-width="1"/>
<text x="305" y="293" fill="#ffffff" font-size="9" font-weight="bold" font-family="Liberation Sans">天</text>
<text x="305" y="318" fill="#ffffff" font-size="9" font-weight="bold" font-family="Liberation Sans">津</text>
<text x="305" y="343" fill="#ffffff" font-size="9" font-weight="bold" font-family="Liberation Sans">河</text>
<rect x="196" y="391" width="24" height="5" fill="#ffffff"/>
<line x1="196" y1="397" x2="220" y2="397" stroke="#ff00ff" stroke-width="1"/>
<rect x="223" y="393" width="8" height="4" fill="#ffffff"/>
<rect x="344" y="354" width="8" height="3.5" fill="#ffffff"/>
<line x1="341" y1="358.5" x2="354" y2="358.5" stroke="#ffffff" stroke-width="1"/>
<rect x="344" y="391" width="15" height="5" fill="#ffffff"/>
<line x1="343" y1="398.5" x2="359" y2="398.5" stroke="#ff00ff" stroke-width="1"/>
<line x1="557" y1="150.5" x2="662.5" y2="150.5" stroke="#00ff00" stroke-width="1.2"/>
<line x1="557" y1="154.5" x2="662.5" y2="154.5" stroke="#00ff00" stroke-width="1.2"/>
<rect x="557" y="150.5" width="5" height="4" fill="#00ff00"/>
<rect x="586" y="150.5" width="5" height="4" fill="#00ff00"/>
<rect x="616" y="150.5" width="5" height="4" fill="#00ff00"/>
<rect x="646" y="150.5" width="5" height="4" fill="#00ff00"/>
<line x1="572" y1="154" x2="572" y2="158" stroke="#00ff00" stroke-width="1"/>
<rect x="571.5" y="157" width="1" height="1" fill="#ffffff"/>
<line x1="603.5" y1="154" x2="603.5" y2="158" stroke="#00ff00" stroke-width="1"/>
<rect x="603.0" y="157" width="1" height="1" fill="#ffffff"/>
<line x1="634.5" y1="154" x2="634.5" y2="158" stroke="#00ff00" stroke-width="1"/>
<rect x="634.0" y="157" width="1" height="1" fill="#ffffff"/>
<line x1="662.5" y1="154" x2="662.5" y2="158" stroke="#00ff00" stroke-width="1"/>
<rect x="662.0" y="157" width="1" height="1" fill="#ffffff"/>
<line x1="662.5" y1="148" x2="662.5" y2="158" stroke="#00ff00" stroke-width="1"/>
<rect x="600" y="146" width="6" height="4.5" fill="#00ff00"/>
<path d="M550 168 C570 160 588 157 603 157 C630 157 656 164 666 180 C670 188 667 196 658 200" fill="none" stroke="#ffe000" stroke-width="2"/>
<line x1="603.5" y1="157" x2="603.5" y2="188" stroke="#ff0000" stroke-width="1.3"/>
<rect x="659" y="161" width="17" height="4" fill="#ffffff"/>
<line x1="665" y1="166" x2="679" y2="166" stroke="#00ff00" stroke-width="1"/>
<line x1="660" y1="172" x2="665" y2="166" stroke="#00ff00" stroke-width="1"/>
<rect x="581" y="169" width="16" height="3" fill="#ffffff"/>
<rect x="557" y="173" width="6" height="4" fill="#ffffff"/>
<rect x="570" y="173" width="9" height="4" fill="#ffffff"/>
<rect x="581" y="174" width="11" height="2.5" fill="#ffffff"/>
<rect x="581" y="178" width="21" height="3" fill="#ffffff"/>
<rect x="581" y="183" width="21" height="1" fill="#ffffff"/>
<rect x="584" y="184" width="5" height="2" fill="#ffffff"/>
<rect x="607" y="166" width="12" height="3" fill="#ffffff"/>
<rect x="612" y="173" width="10" height="3" fill="#ffffff"/>
<rect x="642" y="173" width="12" height="4" fill="#ffffff"/>
<rect x="617" y="183" width="4" height="3" fill="#ffffff"/>
<rect x="615" y="186" width="10" height="1" fill="#ffffff"/>
<line x1="580.5" y1="173" x2="580.5" y2="187" stroke="#ffffff" stroke-width="1"/>
<path d="M603.5 174 L607 170 L620 170" stroke="#ffffff" stroke-width="1" fill="none"/>
<rect x="567.5" y="180" width="2.5" height="7" fill="#ffffff"/>
<rect x="636.5" y="179" width="2.5" height="8" fill="#ffffff"/>
<rect x="646" y="182" width="6" height="5" fill="#ffffff"/>
<rect x="557" y="185" width="8" height="2" fill="#ffffff"/>
<rect x="642" y="186" width="20" height="1" fill="#ffffff"/>
<rect x="661" y="183" width="1" height="4" fill="#00ff00"/>
<rect x="557" y="187" width="104" height="2" fill="#ff0000"/>
<rect x="557.5" y="189.5" width="102" height="9" fill="none" stroke="#ff00ff" stroke-width="1.5"/>
<line x1="570" y1="189" x2="570" y2="198" stroke="#ff00ff" stroke-width="1.2"/>
<line x1="593" y1="189" x2="593" y2="198" stroke="#ff00ff" stroke-width="1.2"/>
<line x1="615" y1="189" x2="615" y2="198" stroke="#ff00ff" stroke-width="1.2"/>
<line x1="637" y1="189" x2="637" y2="198" stroke="#ff00ff" stroke-width="1.2"/>
<circle cx="562" cy="194" r="2" fill="none" stroke="#ff00ff" stroke-width="1"/>
<circle cx="582" cy="194" r="2" fill="none" stroke="#ff00ff" stroke-width="1"/>
<circle cx="604" cy="194" r="2" fill="none" stroke="#ff00ff" stroke-width="1"/>
<circle cx="626" cy="194" r="2" fill="none" stroke="#ff00ff" stroke-width="1"/>
<circle cx="648" cy="194" r="2" fill="none" stroke="#ff00ff" stroke-width="1"/>
<line x1="557" y1="198.7" x2="660" y2="198.7" stroke="#ff00ff" stroke-width="1.5"/>
<rect x="557" y="200" width="5" height="3.5" fill="#00ff00"/>
<rect x="578" y="200" width="5" height="3.5" fill="#00ff00"/>
<rect x="600" y="200" width="5" height="3.5" fill="#00ff00"/>
<rect x="622" y="200" width="5" height="3.5" fill="#00ff00"/>
<rect x="644" y="200" width="5" height="3.5" fill="#00ff00"/>
<line x1="557" y1="203.5" x2="660" y2="203.5" stroke="#00ff00" stroke-width="1.2"/>
<line x1="557" y1="206" x2="660" y2="206" stroke="#ff00ff" stroke-width="1.3"/>
<line x1="570" y1="197" x2="570" y2="205" stroke="#ff0000" stroke-width="0.8"/>
<line x1="592" y1="197" x2="592" y2="205" stroke="#ff0000" stroke-width="0.8"/>
<line x1="614" y1="197" x2="614" y2="205" stroke="#ff0000" stroke-width="0.8"/>
<line x1="636" y1="197" x2="636" y2="205" stroke="#ff0000" stroke-width="0.8"/>
<rect x="600" y="207" width="6" height="3" fill="#00ff00"/>
<rect x="610" y="206" width="7" height="4" fill="#ffffff"/>
<line x1="604" y1="204" x2="610" y2="210" stroke="#00ff00" stroke-width="1"/>
<path d="M660 206 L665 206 L665 213 L660 213" stroke="#00ff00" stroke-width="1" fill="none"/>
<rect x="661" y="208" width="3" height="3" fill="#00ff00"/>
<line x1="557" y1="211" x2="660" y2="211" stroke="#00ff00" stroke-width="1.2"/>
<line x1="557" y1="212.7" x2="660" y2="212.7" stroke="#ff00ff" stroke-width="1.3"/>
<rect x="557.5" y="214" width="13" height="4" fill="none" stroke="#ff00ff" stroke-width="1"/>
<rect x="560" y="214.5" width="6" height="3" fill="#00ff00"/>
<rect x="572.5" y="214" width="13" height="4" fill="none" stroke="#ff00ff" stroke-width="1"/>
<rect x="575" y="214.5" width="6" height="3" fill="#00ff00"/>
<rect x="587.5" y="214" width="13" height="4" fill="none" stroke="#ff00ff" stroke-width="1"/>
<rect x="590" y="214.5" width="6" height="3" fill="#00ff00"/>
<rect x="602.5" y="214" width="13" height="4" fill="none" stroke="#ff00ff" stroke-width="1"/>
<rect x="605" y="214.5" width="6" height="3" fill="#00ff00"/>
<rect x="617.5" y="214" width="13" height="4" fill="none" stroke="#ff00ff" stroke-width="1"/>
<rect x="620" y="214.5" width="6" height="3" fill="#00ff00"/>
<rect x="632.5" y="214" width="13" height="4" fill="none" stroke="#ff00ff" stroke-width="1"/>
<rect x="635" y="214.5" width="6" height="3" fill="#00ff00"/>
<rect x="647.5" y="214" width="13" height="4" fill="none" stroke="#ff00ff" stroke-width="1"/>
<rect x="650" y="214.5" width="6" height="3" fill="#00ff00"/>
<line x1="557" y1="219.7" x2="660" y2="219.7" stroke="#00ff00" stroke-width="1.2"/>
<path d="M563 220 L563 232 Q566 236.5 569 232 L569 220" stroke="#ff00ff" stroke-width="1.2" fill="none"/>
<line x1="566" y1="218" x2="566" y2="236" stroke="#ff0000" stroke-width="1"/>
<rect x="563" y="220.5" width="5" height="3" fill="#ffe000"/>
<rect x="565" y="227" width="2" height="2" fill="#00ff00"/>
<path d="M578 220 L578 232 Q581 236.5 584 232 L584 220" stroke="#ff00ff" stroke-width="1.2" fill="none"/>
<line x1="581" y1="218" x2="581" y2="236" stroke="#ff0000" stroke-width="1"/>
<rect x="578" y="220.5" width="5" height="3" fill="#ffe000"/>
<rect x="580" y="227" width="2" height="2" fill="#00ff00"/>
<path d="M593 220 L593 232 Q596 236.5 599 232 L599 220" stroke="#ff00ff" stroke-width="1.2" fill="none"/>
<line x1="596" y1="218" x2="596" y2="236" stroke="#ff0000" stroke-width="1"/>
<rect x="593" y="220.5" width="5" height="3" fill="#ffe000"/>
<rect x="595" y="227" width="2" height="2" fill="#00ff00"/>
<path d="M608 220 L608 232 Q611 236.5 614 232 L614 220" stroke="#ff00ff" stroke-width="1.2" fill="none"/>
<line x1="611" y1="218" x2="611" y2="236" stroke="#ff0000" stroke-width="1"/>
<rect x="608" y="220.5" width="5" height="3" fill="#ffe000"/>
<rect x="610" y="227" width="2" height="2" fill="#00ff00"/>
<path d="M623 220 L623 232 Q626 236.5 629 232 L629 220" stroke="#ff00ff" stroke-width="1.2" fill="none"/>
<line x1="626" y1="218" x2="626" y2="236" stroke="#ff0000" stroke-width="1"/>
<rect x="623" y="220.5" width="5" height="3" fill="#ffe000"/>
<rect x="625" y="227" width="2" height="2" fill="#00ff00"/>
<path d="M638 220 L638 232 Q641 236.5 644 232 L644 220" stroke="#ff00ff" stroke-width="1.2" fill="none"/>
<line x1="641" y1="218" x2="641" y2="236" stroke="#ff0000" stroke-width="1"/>
<rect x="638" y="220.5" width="5" height="3" fill="#ffe000"/>
<rect x="640" y="227" width="2" height="2" fill="#00ff00"/>
<path d="M653 220 L653 232 Q656 236.5 659 232 L659 220" stroke="#ff00ff" stroke-width="1.2" fill="none"/>
<line x1="656" y1="218" x2="656" y2="236" stroke="#ff0000" stroke-width="1"/>
<rect x="653" y="220.5" width="5" height="3" fill="#ffe000"/>
<rect x="655" y="227" width="2" height="2" fill="#00ff00"/>
<line x1="557" y1="226.5" x2="678" y2="226.5" stroke="#ffffff" stroke-width="1.2"/>
<rect x="658" y="222" width="19" height="5" fill="#ffffff"/>
<rect x="600" y="241" width="10" height="5" fill="#ffffff"/>
<rect x="611" y="242" width="6" height="3" fill="#ffffff"/>
<line x1="600" y1="246.5" x2="611" y2="246.5" stroke="#ff00ff" stroke-width="1"/>
<line x1="697" y1="164" x2="796" y2="164" stroke="#00ff00" stroke-width="1.3"/>
<line x1="697" y1="170" x2="796" y2="170" stroke="#00ff00" stroke-width="1.3"/>
<line x1="697.5" y1="163" x2="697.5" y2="173" stroke="#ffffff" stroke-width="1"/>
<line x1="725" y1="167" x2="725" y2="173" stroke="#00ff00" stroke-width="1"/>
<line x1="756" y1="167" x2="756" y2="173" stroke="#00ff00" stroke-width="1"/>
<line x1="788" y1="167" x2="788" y2="173" stroke="#00ff00" stroke-width="1"/>
<rect x="753" y="160" width="6" height="4" fill="#00ff00"/>
<rect x="710" y="166" width="4" height="3" fill="#00ff00"/>
<rect x="738" y="166" width="4" height="3" fill="#00ff00"/>
<rect x="770" y="166" width="4" height="3" fill="#00ff00"/>
<path d="M698 183 Q690 191 701 199" stroke="#ffe000" stroke-width="2" fill="none"/>
<line x1="756.5" y1="170" x2="756.5" y2="200" stroke="#ff0000" stroke-width="1.3"/>
<rect x="705" y="177" width="12" height="4" fill="#ffffff"/>
<rect x="723" y="179" width="10" height="3" fill="#ffffff"/>
<rect x="735" y="174" width="15" height="3" fill="#ffffff"/>
<rect x="735" y="179" width="11" height="3" fill="#ffffff"/>
<rect x="735" y="183" width="20" height="3" fill="#ffffff"/>
<rect x="760" y="170" width="12" height="4" fill="#ffffff"/>
<rect x="766" y="177" width="10" height="4" fill="#ffffff"/>
<line x1="734.5" y1="178" x2="734.5" y2="194" stroke="#ffffff" stroke-width="1"/>
<path d="M756 180 L760 174 L774 174" stroke="#ffffff" stroke-width="1" fill="none"/>
<rect x="721" y="185" width="3" height="5" fill="#ffffff"/>
<rect x="790" y="184" width="3" height="5" fill="#ffffff"/>
<rect x="708" y="189" width="6" height="3" fill="#ffffff"/>
<rect x="697" y="192" width="99" height="2" fill="#ff0000"/>
<line x1="702" y1="197" x2="796" y2="197" stroke="#ff00ff" stroke-width="2"/>
<path d="M722 195 L724 198 L726 195" stroke="#ff00ff" stroke-width="1" fill="none"/>
<path d="M744 195 L746 198 L748 195" stroke="#ff00ff" stroke-width="1" fill="none"/>
<path d="M766 195 L768 198 L770 195" stroke="#ff00ff" stroke-width="1" fill="none"/>
<path d="M788 195 L790 198 L792 195" stroke="#ff00ff" stroke-width="1" fill="none"/>
<rect x="761" y="195" width="4" height="2" fill="#00ff00"/>
<rect x="752" y="205" width="8" height="4" fill="#ffffff"/>
<rect x="762" y="206" width="7" height="3" fill="#ffffff"/>
<line x1="751" y1="211" x2="761" y2="211" stroke="#ff00ff" stroke-width="1"/>
<line x1="557" y1="258.5" x2="608" y2="258.5" stroke="#ffffff" stroke-width="1"/>
<line x1="573.5" y1="226" x2="573.5" y2="292" stroke="#ffffff" stroke-width="1"/>
<rect x="570.5" y="255.5" width="6" height="6" fill="none" stroke="#ffffff" stroke-width="1.2"/>
<line x1="557" y1="264.5" x2="664" y2="264.5" stroke="#00ff00" stroke-width="1.3"/>
<line x1="557" y1="270.5" x2="664" y2="270.5" stroke="#00ff00" stroke-width="1.3"/>
<line x1="663.5" y1="262" x2="663.5" y2="273" stroke="#ffffff" stroke-width="1"/>
<rect x="600" y="260" width="6" height="5" fill="#00ff00"/>
<rect x="558" y="266" width="5" height="3" fill="#00ff00"/>
<rect x="586" y="266" width="5" height="3" fill="#00ff00"/>
<rect x="617" y="266" width="5" height="3" fill="#00ff00"/>
<rect x="647" y="266" width="5" height="3" fill="#00ff00"/>
<line x1="572" y1="270" x2="572" y2="275" stroke="#00ff00" stroke-width="1"/>
<line x1="603" y1="270" x2="603" y2="275" stroke="#00ff00" stroke-width="1"/>
<line x1="635" y1="270" x2="635" y2="275" stroke="#00ff00" stroke-width="1"/>
<line x1="603.5" y1="276" x2="603.5" y2="325" stroke="#ff0000" stroke-width="1.3"/>
<rect x="582" y="276" width="15" height="3" fill="#ffffff"/>
<rect x="557" y="280" width="7" height="3" fill="#ffffff"/>
<rect x="570" y="280" width="10" height="3" fill="#ffffff"/>
<rect x="582" y="281" width="12" height="3" fill="#ffffff"/>
<rect x="612" y="274" width="11" height="3" fill="#ffffff"/>
<rect x="613" y="280" width="10" height="3" fill="#ffffff"/>
<rect x="642" y="280" width="12" height="3" fill="#ffffff"/>
<rect x="582" y="285" width="20" height="3" fill="#ffffff"/>
<rect x="582" y="290" width="20" height="2" fill="#ffffff"/>
<line x1="581.5" y1="280" x2="581.5" y2="295" stroke="#ffffff" stroke-width="1"/>
<path d="M603 282 L607 277 L621 277" stroke="#ffffff" stroke-width="1" fill="none"/>
<rect x="568" y="287" width="3" height="6" fill="#ffffff"/>
<rect x="637" y="286" width="3" height="6" fill="#ffffff"/>
<rect x="608" y="289" width="2" height="4" fill="#00ff00"/>
<rect x="557" y="294" width="105" height="2" fill="#ff0000"/>
<rect x="557" y="296" width="105" height="6" fill="#ff00ff"/>
<circle cx="572" cy="301" r="1.5" fill="#ffffff"/>
<circle cx="592" cy="301" r="1.5" fill="#ffffff"/>
<circle cx="613" cy="301" r="1.5" fill="#ffffff"/>
<circle cx="633" cy="301" r="1.5" fill="#ffffff"/>
<circle cx="653" cy="301" r="1.5" fill="#ffffff"/>
<line x1="557" y1="302.5" x2="662" y2="302.5" stroke="#00ff00" stroke-width="1.2"/>
<rect x="561" y="302" width="4" height="4" fill="#00ff00"/>
<rect x="581" y="302" width="4" height="4" fill="#00ff00"/>
<rect x="601" y="302" width="4" height="4" fill="#00ff00"/>
<rect x="621" y="302" width="4" height="4" fill="#00ff00"/>
<rect x="641" y="302" width="4" height="4" fill="#00ff00"/>
<line x1="557" y1="307.5" x2="662" y2="307.5" stroke="#00ff00" stroke-width="1.2"/>
<line x1="557" y1="310.5" x2="662" y2="310.5" stroke="#ff00ff" stroke-width="1.5"/>
<rect x="595" y="311" width="6" height="3" fill="#00ff00"/>
<rect x="605" y="311" width="12" height="3" fill="#00ff00"/>
<line x1="557" y1="315.5" x2="662" y2="315.5" stroke="#00ff00" stroke-width="1.2"/>
<line x1="557" y1="317.5" x2="662" y2="317.5" stroke="#ff00ff" stroke-width="1.5"/>
<line x1="662.5" y1="294" x2="662.5" y2="318" stroke="#ff00ff" stroke-width="1"/>
<rect x="557" y="318" width="6" height="4" fill="#00ff00"/>
<rect x="570" y="318" width="6" height="4" fill="#00ff00"/>
<rect x="583" y="318" width="6" height="4" fill="#00ff00"/>
<rect x="596" y="318" width="6" height="4" fill="#00ff00"/>
<rect x="609" y="318" width="6" height="4" fill="#00ff00"/>
<rect x="622" y="318" width="6" height="4" fill="#00ff00"/>
<rect x="635" y="318" width="6" height="4" fill="#00ff00"/>
<rect x="648" y="318" width="6" height="4" fill="#00ff00"/>
<rect x="661" y="318" width="6" height="4" fill="#00ff00"/>
<path d="M558.0 320 L558.0 333 Q560.5 337 563.0 333 L563.0 320" stroke="#ff00ff" stroke-width="1.2" fill="none"/>
<line x1="560.5" y1="320" x2="560.5" y2="336" stroke="#ff0000" stroke-width="1"/>
<rect x="558.0" y="322" width="4" height="3" fill="#ffe000"/>
<path d="M570.5 320 L570.5 333 Q573.0 337 575.5 333 L575.5 320" stroke="#ff00ff" stroke-width="1.2" fill="none"/>
<line x1="573.0" y1="320" x2="573.0" y2="336" stroke="#ff0000" stroke-width="1"/>
<rect x="570.5" y="322" width="4" height="3" fill="#ffe000"/>
<path d="M583.0 320 L583.0 333 Q585.5 337 588.0 333 L588.0 320" stroke="#ff00ff" stroke-width="1.2" fill="none"/>
<line x1="585.5" y1="320" x2="585.5" y2="336" stroke="#ff0000" stroke-width="1"/>
<rect x="583.0" y="322" width="4" height="3" fill="#ffe000"/>
<path d="M595.5 320 L595.5 333 Q598.0 337 600.5 333 L600.5 320" stroke="#ff00ff" stroke-width="1.2" fill="none"/>
<line x1="598.0" y1="320" x2="598.0" y2="336" stroke="#ff0000" stroke-width="1"/>
<rect x="595.5" y="322" width="4" height="3" fill="#ffe000"/>
<path d="M608.0 320 L608.0 333 Q610.5 337 613.0 333 L613.0 320" stroke="#ff00ff" stroke-width="1.2" fill="none"/>
<line x1="610.5" y1="320" x2="610.5" y2="336" stroke="#ff0000" stroke-width="1"/>
<rect x="608.0" y="322" width="4" height="3" fill="#ffe000"/>
<path d="M620.5 320 L620.5 333 Q623.0 337 625.5 333 L625.5 320" stroke="#ff00ff" stroke-width="1.2" fill="none"/>
<line x1="623.0" y1="320" x2="623.0" y2="336" stroke="#ff0000" stroke-width="1"/>
<rect x="620.5" y="322" width="4" height="3" fill="#ffe000"/>
<path d="M633.0 320 L633.0 333 Q635.5 337 638.0 333 L638.0 320" stroke="#ff00ff" stroke-width="1.2" fill="none"/>
<line x1="635.5" y1="320" x2="635.5" y2="336" stroke="#ff0000" stroke-width="1"/>
<rect x="633.0" y="322" width="4" height="3" fill="#ffe000"/>
<path d="M645.5 320 L645.5 333 Q648.0 337 650.5 333 L650.5 320" stroke="#ff00ff" stroke-width="1.2" fill="none"/>
<line x1="648.0" y1="320" x2="648.0" y2="336" stroke="#ff0000" stroke-width="1"/>
<rect x="645.5" y="322" width="4" height="3" fill="#ffe000"/>
<path d="M658.0 320 L658.0 333 Q660.5 337 663.0 333 L663.0 320" stroke="#ff00ff" stroke-width="1.2" fill="none"/>
<line x1="660.5" y1="320" x2="660.5" y2="336" stroke="#ff0000" stroke-width="1"/>
<rect x="658.0" y="322" width="4" height="3" fill="#ffe000"/>
<line x1="557" y1="329.5" x2="685" y2="329.5" stroke="#ffffff" stroke-width="1.2"/>
<rect x="663" y="325" width="19" height="4" fill="#ffffff"/>
<rect x="599" y="340" width="8" height="5" fill="#ffffff"/>
<rect x="608" y="341" width="6" height="4" fill="#ffffff"/>
<rect x="677" y="269" width="9" height="4" fill="#00ff00"/>
<rect x="682" y="276" width="76" height="4" fill="#00ff00"/>
<rect x="682" y="282" width="86" height="4" fill="#00ff00"/>
<rect x="682" y="287" width="106" height="5" fill="#00ff00"/>
<rect x="682" y="293" width="114" height="4" fill="#00ff00"/>
<rect x="682" y="299" width="59" height="4" fill="#00ff00"/>
</svg></div>
<div id="tabs">
<svg width="792" height="28" viewBox="0 0 792 28" style="position:absolute;left:0;top:0">
<defs>
<linearGradient id="ga" x1="0" y1="0" x2="0" y2="1"><stop offset="0" stop-color="#7b7b7b"/><stop offset="0.5" stop-color="#6e6e6e"/><stop offset="1" stop-color="#646464"/></linearGradient>
<linearGradient id="gi" x1="0" y1="0" x2="0" y2="1"><stop offset="0" stop-color="#5b5b5b"/><stop offset="1" stop-color="#545454"/></linearGradient>
</defs>
<rect x="0" y="0" width="792" height="24" fill="#2e333b"/>
<path d="M192.25 0 L397.6 0 C400 3 402 6 402.25 9.25 C403 16 406 21 411 23.6 L176 23.6 C181 21 186 16 187.25 10 C188 6 190 3 192.25 0 Z" fill="url(#ga)"/>
<path d="M-10 0 L182.6 0 C185 3 186.5 6.5 186.5 10 C186.5 17 180 22.5 172 23.6 L-10 23.6 Z" fill="url(#gi)"/>
<path d="M407.25 0 L654.5 0 C657 3 658.5 6.5 658.5 10 C658.5 17 652 22.5 644 23.6 L414 23.6 C407 22.5 402.5 17 402.5 10 C402.5 6.5 404.5 3 407.25 0 Z" fill="url(#gi)"/>
<path d="M662 0 L800 0 L800 23.6 L670 23.6 C663 22.5 658.5 17 658.5 10 C658.5 6.5 659.5 3 662 0 Z" fill="url(#gi)"/>
<path d="M658.5 10 C658.5 17 655 21 650 23.6" stroke="#6a6a6a" stroke-width="0.6" fill="none"/>
<rect x="0" y="23.2" width="792" height="4.5" fill="#606060"/>
<line x1="0" y1="23.5" x2="792" y2="23.5" stroke="#4e4e4e" stroke-width="0.8"/>
<rect x="0" y="27.7" width="792" height="1" fill="#222830"/>
</svg><div class="tt" style="left:-9px;color:#c4c4c4">图河桥</div><div class="tt" style="left:40.5px;color:#c4c4c4">-</div><div class="tt" style="left:48px;color:#c4c4c4">总体布置图</div><div class="tt" style="left:133.5px;color:#c4c4c4">8*</div><svg width="12" height="12" style="position:absolute;left:161px;top:6px"><path d="M0.5 1 L8.5 9 M8.5 1 L0.5 9" stroke="#3c3e42" stroke-width="1.9"/></svg><div class="tt" style="left:199.4px;color:#ffffff">S09B03桥型总体布置图*</div><svg width="12" height="12" style="position:absolute;left:377px;top:6px"><path d="M0.5 1 L8.5 9 M8.5 1 L0.5 9" stroke="#3c3e42" stroke-width="1.9"/></svg><div class="tt" style="left:415.75px;color:#cacaca">S09B05-1主梁一般构造图(一)*</div><svg width="12" height="12" style="position:absolute;left:632px;top:6px"><path d="M0.5 1 L8.5 9 M8.5 1 L0.5 9" stroke="#3c3e42" stroke-width="1.9"/></svg><div class="tt" style="left:671.5px;color:#cacaca">S09B21空间网架材料</div><div style="position:absolute;left:1px;top:-4px;font-family:&quot;Liberation Serif&quot;,serif;font-size:19px;line-height:24px;color:rgba(175,175,175,0.6);letter-spacing:1.5px;white-space:nowrap">中国道桥网</div></div>
<div id="panel"><div style="position:absolute;left:0;top:0;width:198px;height:419px;overflow:hidden"><div class="row" style="top:1px"><svg class="ic" width="18" height="20" viewBox="0 0 18 20"><path d="M0 0 L13.2 0 L17.8 4.6 L17.8 19.8 L0 19.8 Z" fill="#3c5884"/><path d="M13.2 0 L17.8 4.6 L13.2 4.6 Z" fill="#7f93ae"/><rect x="0" y="0" width="7" height="8" fill="#8ea2bf"/><path d="M1 2.5 L9.5 2.5 M3 1 L3 7 M1.5 5 L9 5 M6.5 3 L6.5 7.5" stroke="#d0dae8" stroke-width="0.8" fill="none"/><rect x="4.5" y="3.5" width="3" height="2.5" fill="#3a557c"/><path d="M0 8.2 L17.8 14.7 L17.8 19.8 L0 19.8 Z" fill="#f1c80c"/><path d="M0 8.2 L6 10.4 L0 13 Z" fill="#f7de66"/><path d="M12 19.8 L17.8 15.5 L17.8 19.8 Z" fill="#f6e27a"/><text x="0.9" y="18.4" font-size="5" font-family="Liberation Sans" font-weight="bold" fill="#1a1a10" textLength="10" lengthAdjust="spacingAndGlyphs">DWG</text></svg><div class="tx">S09B03<span>桥型总体布置图</span></div></div><div class="row" style="top:28px"><svg class="ic" width="18" height="20" viewBox="0 0 18 20"><path d="M0 0 L13.2 0 L17.8 4.6 L17.8 19.8 L0 19.8 Z" fill="#3c5884"/><path d="M13.2 0 L17.8 4.6 L13.2 4.6 Z" fill="#7f93ae"/><rect x="0" y="0" width="7" height="8" fill="#8ea2bf"/><path d="M1 2.5 L9.5 2.5 M3 1 L3 7 M1.5 5 L9 5 M6.5 3 L6.5 7.5" stroke="#d0dae8" stroke-width="0.8" fill="none"/><rect x="4.5" y="3.5" width="3" height="2.5" fill="#3a557c"/><path d="M0 8.2 L17.8 14.7 L17.8 19.8 L0 19.8 Z" fill="#f1c80c"/><path d="M0 8.2 L6 10.4 L0 13 Z" fill="#f7de66"/><path d="M12 19.8 L17.8 15.5 L17.8 19.8 Z" fill="#f6e27a"/><text x="0.9" y="18.4" font-size="5" font-family="Liberation Sans" font-weight="bold" fill="#1a1a10" textLength="10" lengthAdjust="spacingAndGlyphs">DWG</text></svg><div class="tx">S09B05-1<span>主梁一般构造</span></div></div><div class="row" style="top:55px"><svg class="ic" width="18" height="20" viewBox="0 0 18 20"><path d="M0 0 L13.2 0 L17.8 4.6 L17.8 19.8 L0 19.8 Z" fill="#3c5884"/><path d="M13.2 0 L17.8 4.6 L13.2 4.6 Z" fill="#7f93ae"/><rect x="0" y="0" width="7" height="8" fill="#8ea2bf"/><path d="M1 2.5 L9.5 2.5 M3 1 L3 7 M1.5 5 L9 5 M6.5 3 L6.5 7.5" stroke="#d0dae8" stroke-width="0.8" fill="none"/><rect x="4.5" y="3.5" width="3" height="2.5" fill="#3a557c"/><path d="M0 8.2 L17.8 14.7 L17.8 19.8 L0 19.8 Z" fill="#f1c80c"/><path d="M0 8.2 L6 10.4 L0 13 Z" fill="#f7de66"/><path d="M12 19.8 L17.8 15.5 L17.8 19.8 Z" fill="#f6e27a"/><text x="0.9" y="18.4" font-size="5" font-family="Liberation Sans" font-weight="bold" fill="#1a1a10" textLength="10" lengthAdjust="spacingAndGlyphs">DWG</text></svg><div class="tx">S09B05-2<span>主梁一般构造</span></div></div><div class="row" style="top:82px"><svg class="ic" width="18" height="20" viewBox="0 0 18 20"><path d="M0 0 L13.2 0 L17.8 4.6 L17.8 19.8 L0 19.8 Z" fill="#3c5884"/><path d="M13.2 0 L17.8 4.6 L13.2 4.6 Z" fill="#7f93ae"/><rect x="0" y="0" width="7" height="8" fill="#8ea2bf"/><path d="M1 2.5 L9.5 2.5 M3 1 L3 7 M1.5 5 L9 5 M6.5 3 L6.5 7.5" stroke="#d0dae8" stroke-width="0.8" fill="none"/><rect x="4.5" y="3.5" width="3" height="2.5" fill="#3a557c"/><path d="M0 8.2 L17.8 14.7 L17.8 19.8 L0 19.8 Z" fill="#f1c80c"/><path d="M0 8.2 L6 10.4 L0 13 Z" fill="#f7de66"/><path d="M12 19.8 L17.8 15.5 L17.8 19.8 Z" fill="#f6e27a"/><text x="0.9" y="18.4" font-size="5" font-family="Liberation Sans" font-weight="bold" fill="#1a1a10" textLength="10" lengthAdjust="spacingAndGlyphs">DWG</text></svg><div class="tx">S09B06-1<span>主梁预应力钢</span></div></div><div class="row" style="top:109px"><svg class="ic" width="18" height="20" viewBox="0 0 18 20"><path d="M0 0 L13.2 0 L17.8 4.6 L17.8 19.8 L0 19.8 Z" fill="#3c5884"/><path d="M13.2 0 L17.8 4.6 L13.2 4.6 Z" fill="#7f93ae"/><rect x="0" y="0" width="7" height="8" fill="#8ea2bf"/><path d="M1 2.5 L9.5 2.5 M3 1 L3 7 M1.5 5 L9 5 M6.5 3 L6.5 7.5" stroke="#d0dae8" stroke-width="0.8" fill="none"/><rect x="4.5" y="3.5" width="3" height="2.5" fill="#3a557c"/><path d="M0 8.2 L17.8 14.7 L17.8 19.8 L0 19.8 Z" fill="#f1c80c"/><path d="M0 8.2 L6 10.4 L0 13 Z" fill="#f7de66"/><path d="M12 19.8 L17.8 15.5 L17.8 19.8 Z" fill="#f6e27a"/><text x="0.9" y="18.4" font-size="5" font-family="Liberation Sans" font-weight="bold" fill="#1a1a10" textLength="10" lengthAdjust="spacingAndGlyphs">DWG</text></svg><div class="tx">S09B06-2<span>主梁预应力钢</span></div></div><div class="row" style="top:136px"><svg class="ic" width="18" height="20" viewBox="0 0 18 20"><path d="M0 0 L13.2 0 L17.8 4.6 L17.8 19.8 L0 19.8 Z" fill="#3c5884"/><path d="M13.2 0 L17.8 4.6 L13.2 4.6 Z" fill="#7f93ae"/><rect x="0" y="0" width="7" height="8" fill="#8ea2bf"/><path d="M1 2.5 L9.5 2.5 M3 1 L3 7 M1.5 5 L9 5 M6.5 3 L6.5 7.5" stroke="#d0dae8" stroke-width="0.8" fill="none"/><rect x="4.5" y="3.5" width="3" height="2.5" fill="#3a557c"/><path d="M0 8.2 L17.8 14.7 L17.8 19.8 L0 19.8 Z" fill="#f1c80c"/><path d="M0 8.2 L6 10.4 L0 13 Z" fill="#f7de66"/><path d="M12 19.8 L17.8 15.5 L17.8 19.8 Z" fill="#f6e27a"/><text x="0.9" y="18.4" font-size="5" font-family="Liberation Sans" font-weight="bold" fill="#1a1a10" textLength="10" lengthAdjust="spacingAndGlyphs">DWG</text></svg><div class="tx">S09B07-1<span>主梁预应力钢</span></div></div><div class="row" style="top:163px"><svg class="ic" width="18" height="20" viewBox="0 0 18 20"><path d="M0 0 L13.2 0 L17.8 4.6 L17.8 19.8 L0 19.8 Z" fill="#3c5884"/><path d="M13.2 0 L17.8 4.6 L13.2 4.6 Z" fill="#7f93ae"/><rect x="0" y="0" width="7" height="8" fill="#8ea2bf"/><path d="M1 2.5 L9.5 2.5 M3 1 L3 7 M1.5 5 L9 5 M6.5 3 L6.5 7.5" stroke="#d0dae8" stroke-width="0.8" fill="none"/><rect x="4.5" y="3.5" width="3" height="2.5" fill="#3a557c"/><path d="M0 8.2 L17.8 14.7 L17.8 19.8 L0 19.8 Z" fill="#f1c80c"/><path d="M0 8.2 L6 10.4 L0 13 Z" fill="#f7de66"/><path d="M12 19.8 L17.8 15.5 L17.8 19.8 Z" fill="#f6e27a"/><text x="0.9" y="18.4" font-size="5" font-family="Liberation Sans" font-weight="bold" fill="#1a1a10" textLength="10" lengthAdjust="spacingAndGlyphs">DWG</text></svg><div class="tx">S09B07-2<span>主梁预应力钢</span></div></div><div class="row" style="top:190px"><svg class="ic" width="18" height="20" viewBox="0 0 18 20"><path d="M0 0 L13.2 0 L17.8 4.6 L17.8 19.8 L0 19.8 Z" fill="#3c5884"/><path d="M13.2 0 L17.8 4.6 L13.2 4.6 Z" fill="#7f93ae"/><rect x="0" y="0" width="7" height="8" fill="#8ea2bf"/><path d="M1 2.5 L9.5 2.5 M3 1 L3 7 M1.5 5 L9 5 M6.5 3 L6.5 7.5" stroke="#d0dae8" stroke-width="0.8" fill="none"/><rect x="4.5" y="3.5" width="3" height="2.5" fill="#3a557c"/><path d="M0 8.2 L17.8 14.7 L17.8 19.8 L0 19.8 Z" fill="#f1c80c"/><path d="M0 8.2 L6 10.4 L0 13 Z" fill="#f7de66"/><path d="M12 19.8 L17.8 15.5 L17.8 19.8 Z" fill="#f6e27a"/><text x="0.9" y="18.4" font-size="5" font-family="Liberation Sans" font-weight="bold" fill="#1a1a10" textLength="10" lengthAdjust="spacingAndGlyphs">DWG</text></svg><div class="tx">S09B07-3<span>主梁预应力钢</span></div></div><div class="row" style="top:217px"><div style="position:absolute;left:12.3px;top:-2.3px;width:190px;height:28.1px;background:#e5f3fb"></div><svg class="ic" width="18" height="20" viewBox="0 0 18 20"><path d="M0 0 L13.2 0 L17.8 4.6 L17.8 19.8 L0 19.8 Z" fill="#3c5884"/><path d="M13.2 0 L17.8 4.6 L13.2 4.6 Z" fill="#7f93ae"/><rect x="0" y="0" width="7" height="8" fill="#8ea2bf"/><path d="M1 2.5 L9.5 2.5 M3 1 L3 7 M1.5 5 L9 5 M6.5 3 L6.5 7.5" stroke="#d0dae8" stroke-width="0.8" fill="none"/><rect x="4.5" y="3.5" width="3" height="2.5" fill="#3a557c"/><path d="M0 8.2 L17.8 14.7 L17.8 19.8 L0 19.8 Z" fill="#f1c80c"/><path d="M0 8.2 L6 10.4 L0 13 Z" fill="#f7de66"/><path d="M12 19.8 L17.8 15.5 L17.8 19.8 Z" fill="#f6e27a"/><text x="0.9" y="18.4" font-size="5" font-family="Liberation Sans" font-weight="bold" fill="#1a1a10" textLength="10" lengthAdjust="spacingAndGlyphs">DWG</text></svg><div class="tx">S09B07-4<span>主梁预应力钢</span></div></div><div class="row" style="top:244px"><svg class="ic" width="18" height="20" viewBox="0 0 18 20"><path d="M0 0 L13.2 0 L17.8 4.6 L17.8 19.8 L0 19.8 Z" fill="#3c5884"/><path d="M13.2 0 L17.8 4.6 L13.2 4.6 Z" fill="#7f93ae"/><rect x="0" y="0" width="7" height="8" fill="#8ea2bf"/><path d="M1 2.5 L9.5 2.5 M3 1 L3 7 M1.5 5 L9 5 M6.5 3 L6.5 7.5" stroke="#d0dae8" stroke-width="0.8" fill="none"/><rect x="4.5" y="3.5" width="3" height="2.5" fill="#3a557c"/><path d="M0 8.2 L17.8 14.7 L17.8 19.8 L0 19.8 Z" fill="#f1c80c"/><path d="M0 8.2 L6 10.4 L0 13 Z" fill="#f7de66"/><path d="M12 19.8 L17.8 15.5 L17.8 19.8 Z" fill="#f6e27a"/><text x="0.9" y="18.4" font-size="5" font-family="Liberation Sans" font-weight="bold" fill="#1a1a10" textLength="10" lengthAdjust="spacingAndGlyphs">DWG</text></svg><div class="tx">S09B08-1<span>主梁钢筋构造</span></div></div><div class="row" style="top:271px"><svg class="ic" width="18" height="20" viewBox="0 0 18 20"><path d="M0 0 L13.2 0 L17.8 4.6 L17.8 19.8 L0 19.8 Z" fill="#3c5884"/><path d="M13.2 0 L17.8 4.6 L13.2 4.6 Z" fill="#7f93ae"/><rect x="0" y="0" width="7" height="8" fill="#8ea2bf"/><path d="M1 2.5 L9.5 2.5 M3 1 L3 7 M1.5 5 L9 5 M6.5 3 L6.5 7.5" stroke="#d0dae8" stroke-width="0.8" fill="none"/><rect x="4.5" y="3.5" width="3" height="2.5" fill="#3a557c"/><path d="M0 8.2 L17.8 14.7 L17.8 19.8 L0 19.8 Z" fill="#f1c80c"/><path d="M0 8.2 L6 10.4 L0 13 Z" fill="#f7de66"/><path d="M12 19.8 L17.8 15.5 L17.8 19.8 Z" fill="#f6e27a"/><text x="0.9" y="18.4" font-size="5" font-family="Liberation Sans" font-weight="bold" fill="#1a1a10" textLength="10" lengthAdjust="spacingAndGlyphs">DWG</text></svg><div class="tx">S09B08-2<span>主梁钢筋构造</span></div></div><div class="row" style="top:298px"><svg class="ic" width="18" height="20" viewBox="0 0 18 20"><path d="M0 0 L13.2 0 L17.8 4.6 L17.8 19.8 L0 19.8 Z" fill="#3c5884"/><path d="M13.2 0 L17.8 4.6 L13.2 4.6 Z" fill="#7f93ae"/><rect x="0" y="0" width="7" height="8" fill="#8ea2bf"/><path d="M1 2.5 L9.5 2.5 M3 1 L3 7 M1.5 5 L9 5 M6.5 3 L6.5 7.5" stroke="#d0dae8" stroke-width="0.8" fill="none"/><rect x="4.5" y="3.5" width="3" height="2.5" fill="#3a557c"/><path d="M0 8.2 L17.8 14.7 L17.8 19.8 L0 19.8 Z" fill="#f1c80c"/><path d="M0 8.2 L6 10.4 L0 13 Z" fill="#f7de66"/><path d="M12 19.8 L17.8 15.5 L17.8 19.8 Z" fill="#f6e27a"/><text x="0.9" y="18.4" font-size="5" font-family="Liberation Sans" font-weight="bold" fill="#1a1a10" textLength="10" lengthAdjust="spacingAndGlyphs">DWG</text></svg><div class="tx">S09B08-3<span>主梁钢筋构造</span></div></div><div class="row" style="top:325px"><svg class="ic" width="18" height="20" viewBox="0 0 18 20"><path d="M0 0 L13.2 0 L17.8 4.6 L17.8 19.8 L0 19.8 Z" fill="#3c5884"/><path d="M13.2 0 L17.8 4.6 L13.2 4.6 Z" fill="#7f93ae"/><rect x="0" y="0" width="7" height="8" fill="#8ea2bf"/><path d="M1 2.5 L9.5 2.5 M3 1 L3 7 M1.5 5 L9 5 M6.5 3 L6.5 7.5" stroke="#d0dae8" stroke-width="0.8" fill="none"/><rect x="4.5" y="3.5" width="3" height="2.5" fill="#3a557c"/><path d="M0 8.2 L17.8 14.7 L17.8 19.8 L0 19.8 Z" fill="#f1c80c"/><path d="M0 8.2 L6 10.4 L0 13 Z" fill="#f7de66"/><path d="M12 19.8 L17.8 15.5 L17.8 19.8 Z" fill="#f6e27a"/><text x="0.9" y="18.4" font-size="5" font-family="Liberation Sans" font-weight="bold" fill="#1a1a10" textLength="10" lengthAdjust="spacingAndGlyphs">DWG</text></svg><div class="tx">S09B08-4<span>主梁钢筋构造</span></div></div><div class="row" style="top:352px"><svg class="ic" width="18" height="20" viewBox="0 0 18 20"><path d="M0 0 L13.2 0 L17.8 4.6 L17.8 19.8 L0 19.8 Z" fill="#3c5884"/><path d="M13.2 0 L17.8 4.6 L13.2 4.6 Z" fill="#7f93ae"/><rect x="0" y="0" width="7" height="8" fill="#8ea2bf"/><path d="M1 2.5 L9.5 2.5 M3 1 L3 7 M1.5 5 L9 5 M6.5 3 L6.5 7.5" stroke="#d0dae8" stroke-width="0.8" fill="none"/><rect x="4.5" y="3.5" width="3" height="2.5" fill="#3a557c"/><path d="M0 8.2 L17.8 14.7 L17.8 19.8 L0 19.8 Z" fill="#f1c80c"/><path d="M0 8.2 L6 10.4 L0 13 Z" fill="#f7de66"/><path d="M12 19.8 L17.8 15.5 L17.8 19.8 Z" fill="#f6e27a"/><text x="0.9" y="18.4" font-size="5" font-family="Liberation Sans" font-weight="bold" fill="#1a1a10" textLength="10" lengthAdjust="spacingAndGlyphs">DWG</text></svg><div class="tx">S09B09<span>桥梁端横梁钢筋</span></div></div><div class="row" style="top:379px"><svg class="ic" width="18" height="20" viewBox="0 0 18 20"><path d="M0 0 L13.2 0 L17.8 4.6 L17.8 19.8 L0 19.8 Z" fill="#3c5884"/><path d="M13.2 0 L17.8 4.6 L13.2 4.6 Z" fill="#7f93ae"/><rect x="0" y="0" width="7" height="8" fill="#8ea2bf"/><path d="M1 2.5 L9.5 2.5 M3 1 L3 7 M1.5 5 L9 5 M6.5 3 L6.5 7.5" stroke="#d0dae8" stroke-width="0.8" fill="none"/><rect x="4.5" y="3.5" width="3" height="2.5" fill="#3a557c"/><path d="M0 8.2 L17.8 14.7 L17.8 19.8 L0 19.8 Z" fill="#f1c80c"/><path d="M0 8.2 L6 10.4 L0 13 Z" fill="#f7de66"/><path d="M12 19.8 L17.8 15.5 L17.8 19.8 Z" fill="#f6e27a"/><text x="0.9" y="18.4" font-size="5" font-family="Liberation Sans" font-weight="bold" fill="#1a1a10" textLength="10" lengthAdjust="spacingAndGlyphs">DWG</text></svg><div class="tx">S09B10<span>桥墩顶横梁钢筋</span></div></div><div class="row" style="top:406px"><svg class="ic" width="18" height="20" viewBox="0 0 18 20"><path d="M0 0 L13.2 0 L17.8 4.6 L17.8 19.8 L0 19.8 Z" fill="#3c5884"/><path d="M13.2 0 L17.8 4.6 L13.2 4.6 Z" fill="#7f93ae"/><rect x="0" y="0" width="7" height="8" fill="#8ea2bf"/><path d="M1 2.5 L9.5 2.5 M3 1 L3 7 M1.5 5 L9 5 M6.5 3 L6.5 7.5" stroke="#d0dae8" stroke-width="0.8" fill="none"/><rect x="4.5" y="3.5" width="3" height="2.5" fill="#3a557c"/><path d="M0 8.2 L17.8 14.7 L17.8 19.8 L0 19.8 Z" fill="#f1c80c"/><path d="M0 8.2 L6 10.4 L0 13 Z" fill="#f7de66"/><path d="M12 19.8 L17.8 15.5 L17.8 19.8 Z" fill="#f6e27a"/><text x="0.9" y="18.4" font-size="5" font-family="Liberation Sans" font-weight="bold" fill="#1a1a10" textLength="10" lengthAdjust="spacingAndGlyphs">DWG</text></svg><div class="tx">S09B11-1<span>主梁纵向预应</span></div></div></div><svg width="198" height="441" style="position:absolute;left:0;top:0"><circle cx="207" cy="422" r="12.5" fill="none" stroke="#3d8ee6" stroke-width="2"/></svg><div id="status"><span style="position:absolute;left:11px;top:4.5px;white-space:nowrap">46 个项目</span><span style="position:absolute;left:90.5px;top:8px;width:1px;height:14px;background:#e8e8e8"></span><span style="position:absolute;left:102.5px;top:4.5px;white-space:nowrap">选中 1 个项目</span></div></div>
<svg width="800" height="600" style="position:absolute;left:0;top:0"><g font-family="Liberation Serif" font-size="31" fill="#808080"><text x="660.96" y="589.6" transform="translate(660.96 0) scale(0.56 1) translate(-660.96 0)" text-anchor="middle">w</text><text x="670.88" y="589.6" transform="translate(670.88 0) scale(0.56 1) translate(-670.88 0)" text-anchor="middle">w</text><text x="680.80" y="589.6" transform="translate(680.80 0) scale(0.56 1) translate(-680.80 0)" text-anchor="middle">w</text><text x="690.72" y="589.6" transform="translate(690.72 0) scale(0.56 1) translate(-690.72 0)" text-anchor="middle">.</text><text x="700.64" y="589.6" transform="translate(700.64 0) scale(0.56 1) translate(-700.64 0)" text-anchor="middle">c</text><text x="710.56" y="589.6" transform="translate(710.56 0) scale(0.56 1) translate(-710.56 0)" text-anchor="middle">n</text><text x="720.48" y="589.6" transform="translate(720.48 0) scale(0.56 1) translate(-720.48 0)" text-anchor="middle">d</text><text x="730.40" y="589.6" transform="translate(730.40 0) scale(0.56 1) translate(-730.40 0)" text-anchor="middle">a</text><text x="740.32" y="589.6" transform="translate(740.32 0) scale(0.56 1) translate(-740.32 0)" text-anchor="middle">o</text><text x="750.24" y="589.6" transform="translate(750.24 0) scale(0.56 1) translate(-750.24 0)" text-anchor="middle">.</text><text x="760.16" y="589.6" transform="translate(760.16 0) scale(0.56 1) translate(-760.16 0)" text-anchor="middle">c</text><text x="770.08" y="589.6" transform="translate(770.08 0) scale(0.56 1) translate(-770.08 0)" text-anchor="middle">o</text><text x="780.00" y="589.6" transform="translate(780.00 0) scale(0.56 1) translate(-780.00 0)" text-anchor="middle">m</text></g></svg>
<div style="position:absolute;left:4px;top:3px;width:1px;height:594px;background:#fff"></div>
<div style="position:absolute;left:5px;top:32px;width:1px;height:565px;background:#1b2129"></div>
<div style="position:absolute;left:795px;top:32px;width:1px;height:565px;background:#1b2129"></div>
<div style="position:absolute;left:5px;top:596px;width:791px;height:1px;background:#111a33"></div>
</body></html>
